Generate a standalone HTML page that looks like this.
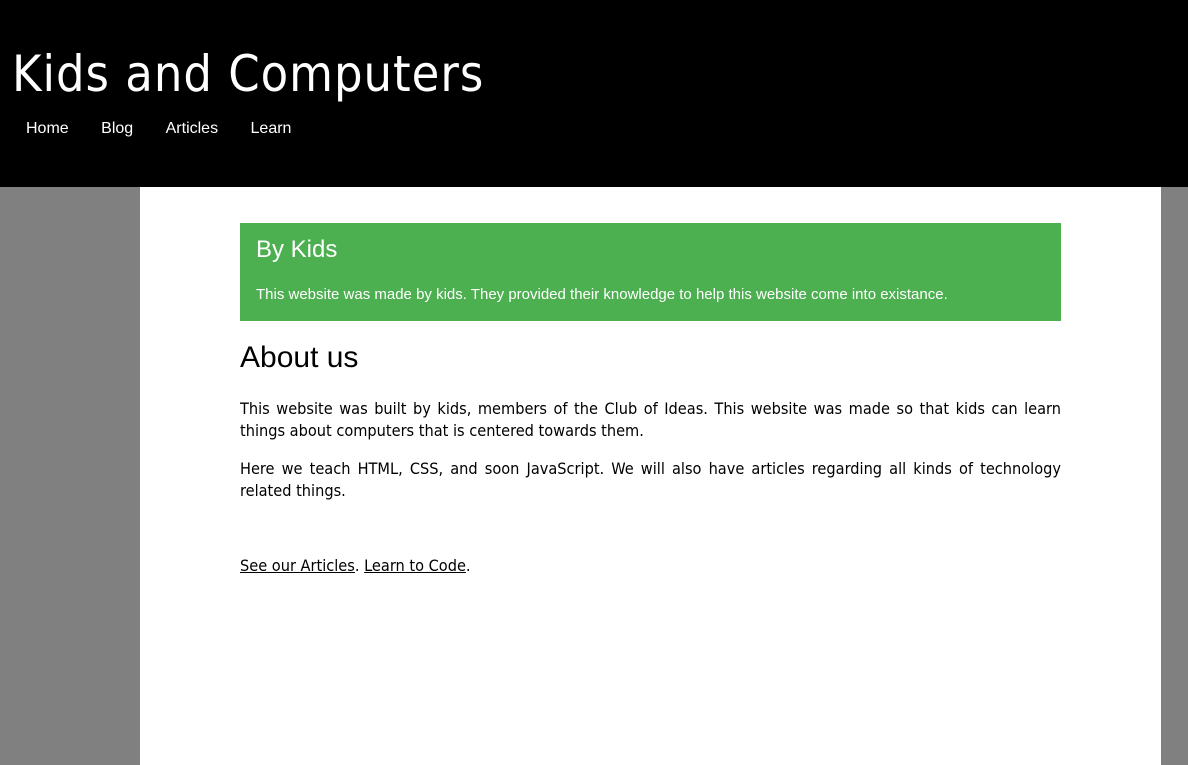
<!DOCTYPE html>
<html><head><meta charset="utf-8"><style>
html,body{margin:0;padding:0;}
body{background:#808080;width:1188px;height:765px;overflow:hidden;font-family:"DejaVu Sans","Liberation Sans",sans-serif;}
header{background:#000;height:187px;position:relative;}
h1{position:absolute;left:12px;top:44px;margin:0;color:#fff;font-family:"DejaVu Sans Condensed","DejaVu Sans",sans-serif;font-weight:normal;font-size:50px;letter-spacing:1px;line-height:60px;}
nav{position:absolute;left:26px;top:120px;font-family:"Liberation Sans",sans-serif;}
nav a{color:#fff;text-decoration:none;font-size:16px;margin-right:28px;}
main{position:absolute;left:140px;top:187px;width:1021px;height:578px;background:#fff;}
.box{position:absolute;left:100px;top:36px;width:821px;height:98px;background:#4CAF50;color:#fff;font-family:"Liberation Sans",sans-serif;}
.box h2{margin:0;position:absolute;left:16px;top:13px;font-weight:normal;font-size:24px;}
.box p{margin:0;position:absolute;left:16px;top:63px;font-size:15px;}
.c{position:absolute;left:100px;width:821px;}
h3{margin:0;font-family:"Liberation Sans",sans-serif;font-weight:normal;font-size:30px;top:154px;}
p.t{margin:0;font-family:"DejaVu Sans Condensed","DejaVu Sans",sans-serif;font-size:16.2px;line-height:22px;text-align:justify;color:#000;}
a.l{color:#000;text-decoration:underline;}
</style></head><body>
<header><h1>Kids and Computers</h1>
<nav><a>Home</a> <a>Blog</a> <a>Articles</a> <a>Learn</a></nav></header>
<main>
<div class="box"><h2>By Kids</h2><p>This website was made by kids. They provided their knowledge to help this website come into existance.</p></div>
<h3 class="c">About us</h3>
<p class="t c" style="top:211px">This website was built by kids, members of the Club of Ideas. This website was made so that kids can learn things about computers that is centered towards them.</p>
<p class="t c" style="top:271px">Here we teach HTML, CSS, and soon JavaScript. We will also have articles regarding all kinds of technology related things.</p>
<p class="t c" style="top:368px"><a class="l">See our Articles</a>. <a class="l">Learn to Code</a>.</p>
</main>
</body></html>
